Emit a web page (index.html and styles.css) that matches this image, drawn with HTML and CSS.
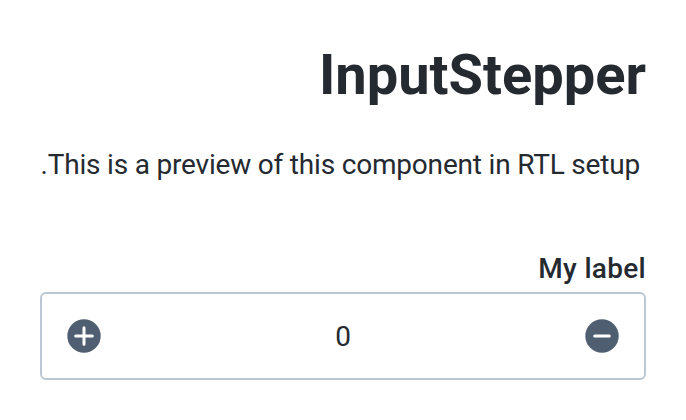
FILE: index.html
```html
<!DOCTYPE html>
<html lang="en" dir="rtl">
<head>
<meta charset="utf-8">
<title>InputStepper</title>
<link rel="stylesheet" href="styles.css">
</head>
<body>
<main class="preview">
  <h1 class="title">InputStepper</h1>
  <p class="description">This is a preview of this component in RTL setup.</p>
  <div class="field">
    <label class="label" for="stepper-value">My label</label>
    <div class="stepper">
      <button class="step" type="button" aria-label="Decrement">
        <svg class="icon" viewBox="0 0 34 34"><circle cx="17" cy="17" r="16.7"/><path d="M9.7 17h14.6"/></svg>
      </button>
      <output class="value" id="stepper-value">0</output>
      <button class="step" type="button" aria-label="Increment">
        <svg class="icon" viewBox="0 0 34 34"><circle cx="17" cy="17" r="16.7"/><path d="M8.7 17h16.6M17 8.7v16.6"/></svg>
      </button>
    </div>
  </div>
</main>
</body>
</html>
```

FILE: styles.css
```css
body {
  margin: 0;
  background: #fff;
  color: #252a31;
  font-family: Roboto, sans-serif;
}

.preview {
  padding: 39px 40px 0;
}

.title {
  margin: 0;
  font-size: 56px;
  line-height: 72px;
  font-weight: 700;
}

.description {
  margin: 34px 0 0;
  padding-right: 6px;
  font-size: 28px;
  line-height: 40px;
  letter-spacing: -0.19px;
  white-space: nowrap;
}

.field {
  margin-top: 64px;
}

.label {
  display: block;
  height: 40px;
  margin-bottom: 3px;
  font-size: 28px;
  line-height: 40px;
  font-weight: 500;
  letter-spacing: 0.3px;
}

.stepper {
  box-sizing: border-box;
  display: flex;
  align-items: center;
  height: 88px;
  padding: 0 25px;
  border: 2px solid #bac7d5;
  border-radius: 6px;
}

.step {
  display: flex;
  padding: 0;
  border: 0;
  background: none;
}

.icon {
  width: 34px;
  height: 34px;
  fill: #4f5e71;
  stroke: none;
}

.icon path {
  fill: none;
  stroke: #fff;
  stroke-width: 3;
  stroke-linecap: round;
}

.value {
  flex: 1;
  padding-top: 2px;
  text-align: center;
  font-size: 28px;
  line-height: 40px;
}
```
